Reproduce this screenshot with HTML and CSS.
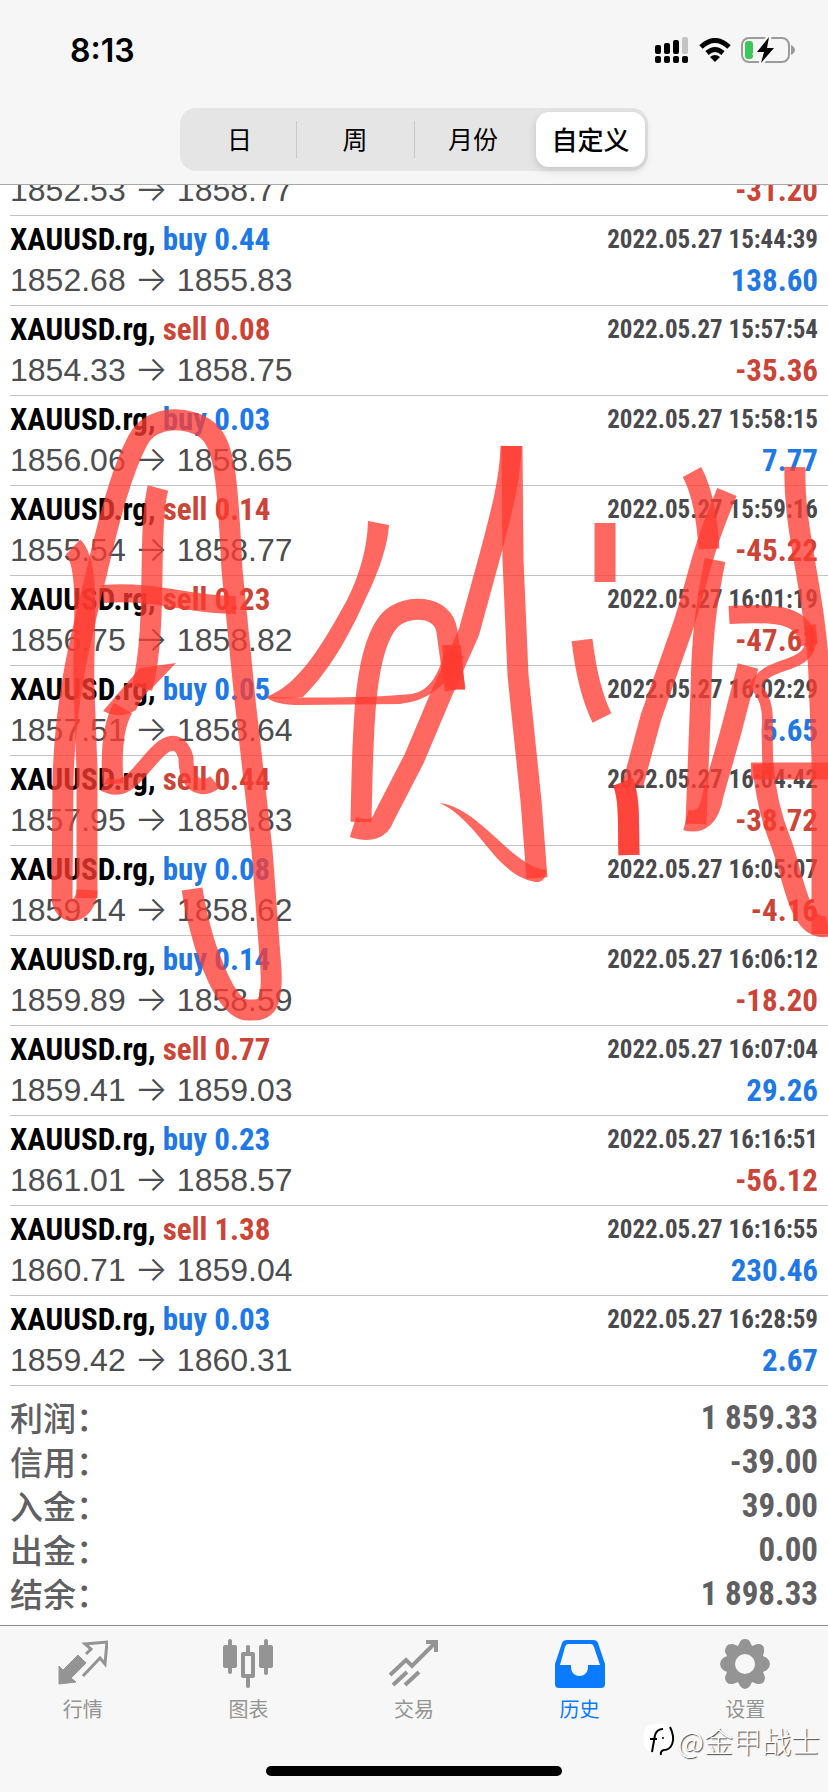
FILE: index.html
```html
<!DOCTYPE html>
<html lang="zh-CN">
<head>
  <meta charset="UTF-8">
  <meta name="viewport" content="width=device-width, initial-scale=1.0">
  <title>历史</title>
  <link rel="stylesheet" href="styles.css">
</head>
<body>

<header class="header">
  <div class="status-bar">
    <span class="time">8:13</span>
    <div class="status-icons">
      <svg width="34" height="26" viewBox="0 0 34 26">
        <rect x="0" y="8" width="6" height="9" rx="2"/>
        <rect x="9" y="6" width="6" height="11" rx="2"/>
        <rect x="18" y="3" width="6" height="14" rx="2"/>
        <rect x="27" y="0" width="6" height="17" rx="2" fill="#c4c4c4"/>
        <rect x="0" y="19" width="6" height="7" rx="2"/>
        <rect x="9" y="19" width="6" height="7" rx="2"/>
        <rect x="18" y="19" width="6" height="7" rx="2"/>
        <rect x="27" y="19" width="6" height="7" rx="2"/>
      </svg>
      <svg width="32" height="24" viewBox="0 0 32 24">
        <path d="M2 9Q16 -4 30 9" fill="none" stroke="#000" stroke-width="5"/>
        <path d="M8 15Q16 8 24 15" fill="none" stroke="#000" stroke-width="5"/>
        <path d="M11 19Q16 15 21 19L16 24Z"/>
      </svg>
      <svg width="54" height="26" viewBox="0 0 54 26">
        <rect x="1" y="1" width="47" height="24" rx="7" fill="none" stroke="#9b9b9b" stroke-width="2"/>
        <path d="M50 8Q54 10 54 13Q54 16 50 18Z" fill="#9b9b9b"/>
        <rect x="4" y="4" width="8" height="18" rx="3" fill="#3cc759"/>
        <path d="M28 0L16 15H23L20 26L33 11H26Z" stroke="#f7f6f6" stroke-width="5"/>
        <path d="M28 0L16 15H23L20 26L33 11H26Z"/>
      </svg>
    </div>
  </div>
  <div class="segments">
    <button type="button" class="segment">日</button>
    <button type="button" class="segment divided">周</button>
    <button type="button" class="segment divided">月份</button>
    <button type="button" class="segment selected">自定义</button>
  </div>
</header>

<main class="history">
  <ul class="deals">
    <li class="deal partial">
      <div class="line"><span class="price">1852.53 <span class="arrow">→</span> 1858.77</span><span class="profit loss">-31.20</span></div>
    </li>
    <li class="deal">
      <div class="line"><span class="symbol">XAUUSD.rg, <span class="gain">buy 0.44</span></span><span class="date">2022.05.27 15:44:39</span></div>
      <div class="line"><span class="price">1852.68 <span class="arrow">→</span> 1855.83</span><span class="profit gain">138.60</span></div>
    </li>
    <li class="deal">
      <div class="line"><span class="symbol">XAUUSD.rg, <span class="loss">sell 0.08</span></span><span class="date">2022.05.27 15:57:54</span></div>
      <div class="line"><span class="price">1854.33 <span class="arrow">→</span> 1858.75</span><span class="profit loss">-35.36</span></div>
    </li>
    <li class="deal">
      <div class="line"><span class="symbol">XAUUSD.rg, <span class="gain">buy 0.03</span></span><span class="date">2022.05.27 15:58:15</span></div>
      <div class="line"><span class="price">1856.06 <span class="arrow">→</span> 1858.65</span><span class="profit gain">7.77</span></div>
    </li>
    <li class="deal">
      <div class="line"><span class="symbol">XAUUSD.rg, <span class="loss">sell 0.14</span></span><span class="date">2022.05.27 15:59:16</span></div>
      <div class="line"><span class="price">1855.54 <span class="arrow">→</span> 1858.77</span><span class="profit loss">-45.22</span></div>
    </li>
    <li class="deal">
      <div class="line"><span class="symbol">XAUUSD.rg, <span class="loss">sell 0.23</span></span><span class="date">2022.05.27 16:01:19</span></div>
      <div class="line"><span class="price">1856.75 <span class="arrow">→</span> 1858.82</span><span class="profit loss">-47.61</span></div>
    </li>
    <li class="deal">
      <div class="line"><span class="symbol">XAUUSD.rg, <span class="gain">buy 0.05</span></span><span class="date">2022.05.27 16:02:29</span></div>
      <div class="line"><span class="price">1857.51 <span class="arrow">→</span> 1858.64</span><span class="profit gain">5.65</span></div>
    </li>
    <li class="deal">
      <div class="line"><span class="symbol">XAUUSD.rg, <span class="loss">sell 0.44</span></span><span class="date">2022.05.27 16:04:42</span></div>
      <div class="line"><span class="price">1857.95 <span class="arrow">→</span> 1858.83</span><span class="profit loss">-38.72</span></div>
    </li>
    <li class="deal">
      <div class="line"><span class="symbol">XAUUSD.rg, <span class="gain">buy 0.08</span></span><span class="date">2022.05.27 16:05:07</span></div>
      <div class="line"><span class="price">1859.14 <span class="arrow">→</span> 1858.62</span><span class="profit loss">-4.16</span></div>
    </li>
    <li class="deal">
      <div class="line"><span class="symbol">XAUUSD.rg, <span class="gain">buy 0.14</span></span><span class="date">2022.05.27 16:06:12</span></div>
      <div class="line"><span class="price">1859.89 <span class="arrow">→</span> 1858.59</span><span class="profit loss">-18.20</span></div>
    </li>
    <li class="deal">
      <div class="line"><span class="symbol">XAUUSD.rg, <span class="loss">sell 0.77</span></span><span class="date">2022.05.27 16:07:04</span></div>
      <div class="line"><span class="price">1859.41 <span class="arrow">→</span> 1859.03</span><span class="profit gain">29.26</span></div>
    </li>
    <li class="deal">
      <div class="line"><span class="symbol">XAUUSD.rg, <span class="gain">buy 0.23</span></span><span class="date">2022.05.27 16:16:51</span></div>
      <div class="line"><span class="price">1861.01 <span class="arrow">→</span> 1858.57</span><span class="profit loss">-56.12</span></div>
    </li>
    <li class="deal">
      <div class="line"><span class="symbol">XAUUSD.rg, <span class="loss">sell 1.38</span></span><span class="date">2022.05.27 16:16:55</span></div>
      <div class="line"><span class="price">1860.71 <span class="arrow">→</span> 1859.04</span><span class="profit gain">230.46</span></div>
    </li>
    <li class="deal">
      <div class="line"><span class="symbol">XAUUSD.rg, <span class="gain">buy 0.03</span></span><span class="date">2022.05.27 16:28:59</span></div>
      <div class="line"><span class="price">1859.42 <span class="arrow">→</span> 1860.31</span><span class="profit gain">2.67</span></div>
    </li>
  </ul>

  <dl class="summary">
    <div class="total"><dt>利润：</dt><dd>1 859.33</dd></div>
    <div class="total"><dt>信用：</dt><dd>-39.00</dd></div>
    <div class="total"><dt>入金：</dt><dd>39.00</dd></div>
    <div class="total"><dt>出金：</dt><dd>0.00</dd></div>
    <div class="total"><dt>结余：</dt><dd>1 898.33</dd></div>
  </dl>
</main>

<footer class="footer">
  <nav class="tabs">
    <a href="#quotes" class="tab">
      <svg width="50" height="50" viewBox="0 0 50 50">
        <path d="M1 27L5 31L20 16L28 24L13 39L18 43L1 45Z" fill="currentColor" stroke="currentColor" stroke-linejoin="round"/>
        <path d="M28 15L33 10L27 5L49 3L47 25L42 19L25 37" fill="none" stroke="currentColor" stroke-width="3"/>
      </svg>
      行情
    </a>
    <a href="#chart" class="tab">
      <svg width="50" height="50" viewBox="0 0 50 50">
        <g fill="currentColor">
          <rect x="0" y="6" width="14" height="23" rx="2"/>
          <rect x="5" y="0" width="4" height="35" rx="2"/>
          <rect x="36" y="6" width="14" height="23" rx="2"/>
          <rect x="41" y="0" width="4" height="36" rx="2"/>
          <rect x="23" y="6" width="4" height="9" rx="2"/>
          <rect x="23" y="38" width="4" height="11" rx="2"/>
        </g>
        <rect x="20" y="15" width="10" height="22" fill="none" stroke="currentColor" stroke-width="4" stroke-linejoin="round"/>
      </svg>
      图表
    </a>
    <a href="#trade" class="tab">
      <svg width="50" height="50" viewBox="0 0 50 50">
        <g fill="none" stroke="currentColor" stroke-width="4">
          <path d="M1 36L17 21L23 27L46 4"/>
          <path d="M37 3H47V13"/>
          <path d="M4 46L18 33M16 46L30 33"/>
        </g>
      </svg>
      交易
    </a>
    <a href="#history" class="tab active">
      <svg width="50" height="50" viewBox="0 0 50 50">
        <path fill="currentColor" fill-rule="evenodd" d="M12 1H38Q42 1 43 4L50 25V45Q50 49 46 49H4Q0 49 0 45V25L7 4Q8 1 12 1ZM13 5Q11 5 10 8L5 26H16V28C16 40 33 40 33 28V26H45L39 8Q38 5 36 5Z"/>
      </svg>
      历史
    </a>
    <a href="#settings" class="tab">
      <svg width="50" height="50" viewBox="0 0 50 50">
        <path d="M25 0Q29 0 30 3L32 7L37 5Q45 4 44 13L43 17L47 19Q53 25 47 31L43 33L45 38Q45 46 37 45L32 43L30 47Q25 53 20 47L18 43L13 45Q5 46 5 38L7 33L3 31Q-3 25 3 19L7 17L5 13Q5 4 13 5L18 7L20 3Q21 0 25 0Z" fill="currentColor"/>
        <circle cx="25" cy="25" r="10" fill="#f7f7f7"/>
      </svg>
      设置
    </a>
  </nav>
  <div class="home-indicator"></div>
  <div class="watermark">
    <svg width="32" height="34" viewBox="0 0 32 34">
      <rect x="0" y="1" width="30" height="28" rx="9" fill="#fff"/>
      <g fill="none" stroke="#000" stroke-width="2">
        <path d="M8 29L11 12Q13 6 19 6M6 16H13"/>
        <path d="M26 4C33 18 27 27 20 27Q16 28 17 32"/>
      </g>
      <circle cx="19" cy="15" r="1"/>
    </svg>
    <span>@金甲战士</span>
  </div>
</footer>

<!-- hand drawn marker over the list -->
<svg class="marker" viewBox="0 0 828 1792">
  <g class="strokes">
    <path d="M73 547C92 565 82 640 84 690L87 770L87 898"/>
    <path d="M87 890C86 914 62 918 62 896L63 780C65 700 80 640 96 575C110 515 122 470 138 440C152 414 190 416 207 430C226 444 228 490 232 570L245 700L262 850L271 970C273 1012 262 1010 248 1010C228 1010 212 965 205 945Q196 915 192 889"/>
    <path d="M103 594C160 590 190 606 236 605" stroke-width="18"/>
    <path d="M158 488C147 530 158 630 142 688"/>
    <path class="fill" d="M176 663L140 668L103 711Q120 720 136 710Q142 695 154 686Z"/>
    <path d="M123 708C113 725 111 755 113 784"/>
    <path d="M104 784C130 798 142 763 163 747Q180 736 186 758Q186 778 195 784Q205 790 215 782" stroke-width="15"/>
    <path class="fill" d="M368 521L389 525Q387 555 365 600C345 645 325 675 303 697Q280 700 266 697C300 685 325 640 347 600Q367 560 368 521Z"/>
    <path class="fill" d="M266 697Q275 705 300 705L400 704Q440 700 464 657L446 645Q437 690 412 694Q360 699 266 697Z"/>
    <path d="M455 690L447 632C444 604 405 604 390 620C362 650 363 740 361 822"/>
    <path d="M353 827Q378 835 384 817L414 759L441 695L469 632L492 548C502 510 510 480 511 446"/>
    <path d="M442 645H461L465 690L446 688Z" class="fill"/>
    <path d="M512 446L513 560L518 675L531 801L537 878"/>
    <path class="fill" d="M440 803C480 808 510 865 546 870Q546 883 535 882C495 875 480 822 440 803Z"/>
    <path d="M605 523V582"/>
    <path d="M582 640Q588 690 602 718"/>
    <path d="M692 472Q706 498 709 549"/>
    <path d="M727 492C698 560 699 580 681 632L651 717L633 784"/>
    <path d="M623 782C630 800 628 820 629 855"/>
    <path d="M623 782C630 800 628 820 629 855"/>
    <path d="M715 560C705 610 702 640 701 690L696 824"/>
    <path d="M686 820Q708 826 713 795L730 735L748 666"/>
    <path d="M795 467C793 530 815 590 819 675L822 759V934"/>
    <path d="M828 926C798 933 794 875 780 840Q766 805 763 764"/>
    <path d="M751 771H828" stroke-width="17"/>
    <path d="M729 615C780 612 805 615 809 645" stroke-width="18"/>
    <path d="M810 625C820 675 770 655 755 686Q770 700 767 730L768 775" stroke-width="11"/>
  </g>
</svg>

</body>
</html>
```
FILE: styles.css
```css
* {
  box-sizing: border-box;
}
body {
  position: relative;
  display: flex;
  flex-direction: column;
  min-height: 100vh;
  margin: 0;
  overflow-x: hidden;
  background-color: #fff;
  color: #000;
  font-family: "Liberation Sans", Arial, "Noto Sans CJK SC", sans-serif;
}
.header {
  padding: 28px 0 13px;
  background-color: #f7f6f6;
  border-bottom: 1px solid #a9a9a9;
}
.status-bar {
  display: flex;
  justify-content: space-between;
  align-items: center;
  height: 44px;
  padding: 0 33px 0 70px;
}
.time {
  font-family: Inter, sans-serif;
  font-size: 32px;
  font-weight: 600;
}
.status-icons {
  display: flex;
  align-items: center;
  gap: 10px;
}
.segments {
  display: grid;
  grid-template-columns: 23fr 24fr 24fr 23fr;
  max-width: 468px;
  height: 63px;
  margin: 36px auto 0;
  padding: 4px 3px;
  background-color: #e6e5e6;
  border-radius: 16px;
}
.segment {
  position: relative;
  padding: 0 0 3px;
  border: none;
  background: none;
  color: #000;
  font-family: "Noto Sans CJK SC", sans-serif;
  font-size: 25px;
  cursor: pointer;
}
.segment.divided::before {
  content: "";
  position: absolute;
  left: 0;
  top: 9px;
  bottom: 9px;
  width: 1px;
  background-color: #c9c9cb;
}
.segment.selected {
  margin-left: 4px;
  background-color: #fff;
  border-radius: 13px;
  box-shadow: 0 3px 8px rgba(0, 0, 0, 0.15);
  font-size: 26px;
  font-weight: 500;
}
.history {
  flex: 1;
}
.deals {
  margin: 0;
  padding: 0 0 0 10px;
  list-style: none;
}
.deal {
  height: 90px;
  padding: 3px 10px 4px 0;
  border-bottom: 1px solid #c3c3c5;
}
.deal.partial {
  display: flex;
  flex-direction: column;
  justify-content: flex-end;
  height: 31px;
  overflow: hidden;
}
.line {
  display: flex;
  justify-content: space-between;
  align-items: center;
  height: 41px;
  flex-shrink: 0;
  line-height: 41px;
  white-space: nowrap;
}
.symbol,
.date,
.profit,
.total dd {
  font-family: "Roboto Condensed", "Liberation Sans Narrow", "Liberation Sans", sans-serif;
  font-weight: bold;
}
.symbol {
  font-size: 31px;
}
.date {
  color: #4a4a4e;
  font-size: 25px;
}
.price {
  color: #4d4d50;
  font-size: 32px;
}
.arrow {
  font-family: Inter, sans-serif;
  font-size: 35px;
  font-weight: 300;
  line-height: 31px;
}
.profit {
  font-size: 31px;
}
.gain {
  color: #1e78e6;
}
.loss {
  color: #cb4437;
}
.summary {
  margin: 0;
  padding: 10px 10px 8px;
  color: #606062;
}
.total {
  display: flex;
  justify-content: space-between;
  height: 44px;
  line-height: 44px;
}
.total dt {
  font-family: "Noto Sans CJK SC", sans-serif;
  font-size: 33px;
  font-weight: 500;
  line-height: 42px;
}
.total dd {
  margin: 0;
  font-size: 33px;
}
.footer {
  position: relative;
  height: 167px;
  background-color: #f7f7f7;
  border-top: 1px solid #8f8f91;
}
.tabs {
  display: grid;
  grid-template-columns: repeat(5, 1fr);
  padding-top: 13px;
}
.tab {
  display: flex;
  flex-direction: column;
  align-items: center;
  gap: 6px;
  color: #949494;
  font-family: "Noto Sans CJK SC", sans-serif;
  font-size: 20px;
  line-height: 28px;
  text-decoration: none;
}
.tab.active {
  color: #0a7aff;
}
.home-indicator {
  width: 296px;
  height: 10px;
  margin: 43px auto 0;
  background-color: #000;
  border-radius: 5px;
}
.watermark {
  position: absolute;
  right: 8px;
  bottom: 32px;
  display: flex;
  align-items: center;
  gap: 2px;
  color: #fff;
  font-family: "Noto Sans CJK SC", sans-serif;
  font-size: 29px;
  font-weight: 300;
  line-height: 40px;
  text-shadow: 1px 1px 1px #444;
}
.marker {
  position: absolute;
  top: 0;
  left: 0;
  width: 100%;
  pointer-events: none;
}
.strokes {
  stroke-width: 21px;
  stroke-linejoin: round;
}
.strokes path {
  fill: none;
  stroke: #ff3b30;
  stroke-opacity: 0.77;
}
.strokes .fill {
  fill: #ff3b30;
  fill-opacity: 0.77;
  stroke: none;
}
```
